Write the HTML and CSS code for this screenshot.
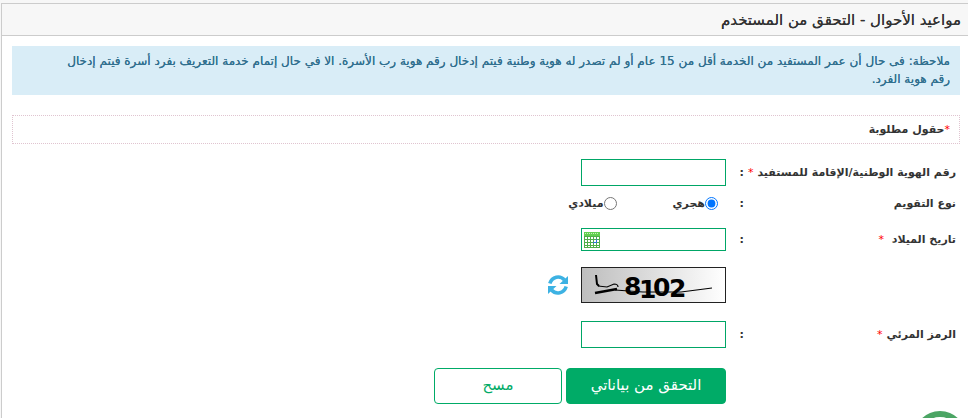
FILE: index.html
```html
<!DOCTYPE html>
<html lang="ar" dir="rtl">
<head>
    <meta charset="UTF-8">
    <meta name="viewport" content="width=device-width, initial-scale=1.0">
    <title>مواعيد الأحوال - التحقق من المستخدم</title>
    <link rel="stylesheet" href="styles.css">
</head>
<body>
    <main class="panel">
        <header class="panel-header">
            <h1>مواعيد الأحوال - التحقق من المستخدم</h1>
        </header>

        <div class="panel-body">
            <p class="note">ملاحظة: فى حال أن عمر المستفيد من الخدمة أقل من 15 عام أو لم تصدر له هوية وطنية فيتم إدخال رقم هوية رب الأسرة. الا في حال إتمام خدمة التعريف بفرد أسرة فيتم إدخال رقم هوية الفرد.</p>
            <p class="required-note"><span class="star">*</span>حقول مطلوبة</p>

            <form class="form">
                <div class="row">
                    <label class="label" for="nationalId">رقم الهوية الوطنية/الإقامة للمستفيد <span class="star">*</span></label>
                    <span class="colon">:</span>
                    <input class="text-box" type="text" id="nationalId">
                </div>

                <div class="row row-radio" role="radiogroup" aria-labelledby="calendarLabel">
                    <span class="label" id="calendarLabel">نوع التقويم</span>
                    <span class="colon">:</span>
                    <div class="radios">
                        <label class="radio"><input type="radio" name="calendar" checked>هجري</label>
                        <label class="radio"><input type="radio" name="calendar">ميلادي</label>
                    </div>
                </div>

                <div class="row row-date">
                    <label class="label" for="birthDate">تاريخ الميلاد <span class="star star-gap">*</span></label>
                    <span class="colon">:</span>
                    <div class="date-box">
                        <input type="text" id="birthDate">
                        <button type="button" class="calendar-btn" aria-label="التقويم">
                            <svg width="16" height="16" viewBox="0 0 16 16" shape-rendering="crispEdges">
                                <rect width="16" height="16" fill="#4fae4a"/>
                                <rect width="16" height="4" fill="#62cf50"/>
                                <path d="M1 1.500h14" stroke="#c9f2bd" stroke-dasharray="1 1"/>
                                <path fill="#fff" d="M1 5h2v2H1zM4 5h2v2H4zM7 5h2v2H7zM10 5h2v2h-2zM13 5h2v2h-2zM1 8h2v2H1zM4 8h2v2H4zM7 8h2v2H7zM10 8h2v2h-2zM13 8h2v2h-2zM1 11h2v2H1zM4 11h2v2H4zM7 11h2v2H7zM10 11h2v2h-2zM13 11h2v2h-2zM1 14h2v1H1zM4 14h2v1H4zM7 14h2v1H7zM10 14h2v1h-2zM13 14h2v1h-2z"/>
                                <path d="M9 10h3V7h1v4H9z" fill="#2f6fe0"/>
                            </svg>
                        </button>
                    </div>
                </div>

                <div class="row row-captcha">
                    <svg class="captcha" viewBox="0 0 145 36" role="img" aria-label="8102">
                        <defs>
                            <linearGradient id="captchaBg">
                                <stop offset="0" stop-color="#bdbdbd"/>
                                <stop offset="1" stop-color="#fff"/>
                            </linearGradient>
                        </defs>
                        <rect x=".5" y=".5" width="144" height="35" fill="url(#captchaBg)" stroke="#222"/>
                        <text class="captcha-text" x="43 58 72 88" y="28 31 29 30">8102</text>
                        <g fill="none" stroke="#000">
                            <path d="M15 8l1 9 2 2" stroke-width="2"/>
                            <path d="M17 19l9 1 7-3q4 0 4 3" stroke-width="1.200"/>
                            <path d="M14 26l22-4" stroke-width="2.400"/>
                            <path d="M34 23l28 2h38l31-4" stroke-width="1.200"/>
                        </g>
                    </svg>
                    <button type="button" class="refresh-btn" aria-label="تحديث">
                        <svg width="20" height="20" viewBox="0 0 20 20">
                            <g id="refreshArrow">
                                <path d="M1.800 8.500C4 1.500 12 0 16.500 5" fill="none" stroke="#3db2e3" stroke-width="3.600"/>
                                <path d="M20 1v8h-8.500z" fill="#3db2e3"/>
                            </g>
                            <use href="#refreshArrow" transform="rotate(180 10 10)"/>
                        </svg>
                    </button>
                </div>

                <div class="row">
                    <label class="label" for="captchaCode">الرمز المرئي <span class="star">*</span></label>
                    <span class="colon">:</span>
                    <input class="text-box" type="text" id="captchaCode">
                </div>

                <div class="row row-buttons">
                    <div class="buttons">
                        <button type="submit" class="btn btn-primary">التحقق من بياناتي</button>
                        <button type="reset" class="btn btn-outline">مسح</button>
                    </div>
                </div>
            </form>
        </div>
    </main>

    <div class="help-badge"></div>
</body>
</html>
```
FILE: styles.css
```css
* {
    box-sizing: border-box;
}
body {
    font-family: "DejaVu Sans", sans-serif;
    font-size: 11px;
    color: #333;
    background-color: #f7f7f7;
    margin: 0;
    padding-top: 3px;
    overflow: hidden;
}
.panel {
    min-height: 100vh;
    margin-left: 1px;
    background: #fff;
    border-top: 1px solid #ccc;
    border-left: 1px solid #ccc;
}
.panel-header {
    height: 32px;
    padding: 0 7px;
    display: flex;
    align-items: center;
    background: #f7f7f7;
    border-bottom: 1px solid #ccc;
}
.panel-header h1 {
    margin: 0;
    font-size: 15px;
    font-weight: normal;
    text-shadow: 0 0 0 currentColor;
}
.panel-body {
    padding: 10px 8px 0 10px;
}
.note {
    margin: 0 0 20px;
    padding: 6px 10px 7px 48px;
    background: #d9edf7;
    color: #31708f;
    font-size: 12px;
    line-height: 18px;
    text-shadow: 0 0 0 currentColor;
}
.required-note {
    height: 29px;
    margin: 0 0 15px;
    padding: 0 9px;
    border: 1px dotted #e0c4d0;
    font-weight: bold;
    line-height: 27px;
}
.star {
    color: #f00;
    font-weight: normal;
}
.star-gap {
    margin-right: 4px;
}
.form {
    padding: 0 4px;
}
.row {
    display: grid;
    grid-template-columns: 212px 18px 145px 1fr;
    align-items: center;
    min-height: 27px;
}
.label,
.colon,
.radio {
    font-weight: bold;
}
.label {
    white-space: nowrap;
}
.text-box,
.date-box {
    width: 145px;
    background: #fff;
    border: 1px solid #00a666;
}
.text-box {
    height: 27px;
    padding: 2px 4px;
    font: inherit;
}
.row-radio {
    margin-top: 4px;
}
.radios {
    display: flex;
    gap: 56px;
    padding-right: 8px;
}
.radio {
    display: flex;
    align-items: center;
    white-space: nowrap;
}
.radio input {
    width: 13px;
    height: 13px;
    margin: 0;
}
.row-date {
    min-height: 23px;
    margin-top: 11px;
}
.date-box {
    height: 23px;
    display: flex;
    align-items: center;
    padding: 0 2px;
}
.date-box input {
    flex: 1;
    min-width: 0;
    height: 19px;
    padding: 0 2px;
    border: 0;
    outline: 0;
    font: inherit;
}
.calendar-btn,
.refresh-btn {
    display: flex;
    padding: 0;
    border: 0;
    background: none;
    cursor: pointer;
}
.row-captcha {
    margin: 16px 0 18px;
}
.captcha {
    grid-column: 3;
    width: 145px;
    height: 36px;
}
.captcha-text {
    direction: ltr;
    font-family: "DejaVu Sans", sans-serif;
    font-size: 25px;
    font-weight: bold;
}
.refresh-btn {
    margin-right: 13px;
    justify-self: start;
}
.row-buttons {
    margin-top: 20px;
}
.buttons {
    grid-column: 3 / -1;
    display: flex;
    gap: 4px;
}
.btn {
    height: 36px;
    padding: 0 0 2px;
    border: 1px solid #00ab67;
    border-radius: 4px;
    font-family: inherit;
    font-size: 15px;
    cursor: pointer;
}
.btn-primary {
    width: 160px;
    background: #00ab67;
    color: #fff;
}
.btn-outline {
    width: 128px;
    background: #fff;
    color: #00ab67;
}
.help-badge {
    position: fixed;
    left: 914px;
    bottom: -45px;
    width: 52px;
    height: 52px;
    border: 6px solid #4ba564;
    border-radius: 50%;
    background: #fff;
}
```
